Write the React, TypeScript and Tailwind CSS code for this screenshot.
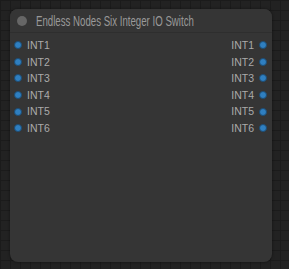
const slots = ["INT1", "INT2", "INT3", "INT4", "INT5", "INT6"];

function Dot() {
  return <span className="block w-[8px] h-[8px] rounded-full bg-[#2f7fc0] border border-[#1c4c74]" />;
}

export default function App() {
  return (
    <div
      className="w-[289px] h-[269px] pt-[9px] pl-[10px] bg-[#222222] font-['Liberation_Sans',Arial,sans-serif]"
      style={{
        backgroundImage:
          "linear-gradient(#1b1b1b 1px, transparent 1px), linear-gradient(90deg, #1b1b1b 1px, transparent 1px)",
        backgroundSize: "10px 10px",
      }}
    >
      <div className="w-[262px] h-[253px] rounded-[8px] bg-[#353535] shadow-[0_0_3px_rgba(0,0,0,0.5)] flex flex-col">
        <div className="h-[24px] flex items-center border-b border-[#2e2e2e] rounded-t-[8px] bg-[#353535]">
          <span className="ml-[7px] w-[10px] h-[10px] rounded-full bg-[#666666]" />
          <span className="ml-[9px] text-[14px] text-[#999999] leading-none whitespace-nowrap origin-left scale-x-[0.69]">
            Endless Nodes Six Integer IO Switch
          </span>
        </div>
        <div className="pt-[4px] flex flex-col">
          {slots.map((s) => (
            <div key={s} className="h-[16.6px] flex items-center justify-between text-[10.5px] text-[#aaaaaa] leading-none">
              <div className="flex items-center gap-[5px] pl-[4px]">
                <Dot />
                <span>{s}</span>
              </div>
              <div className="flex items-center gap-[5px] pr-[5px]">
                <span>{s}</span>
                <Dot />
              </div>
            </div>
          ))}
        </div>
      </div>
    </div>
  );
}
